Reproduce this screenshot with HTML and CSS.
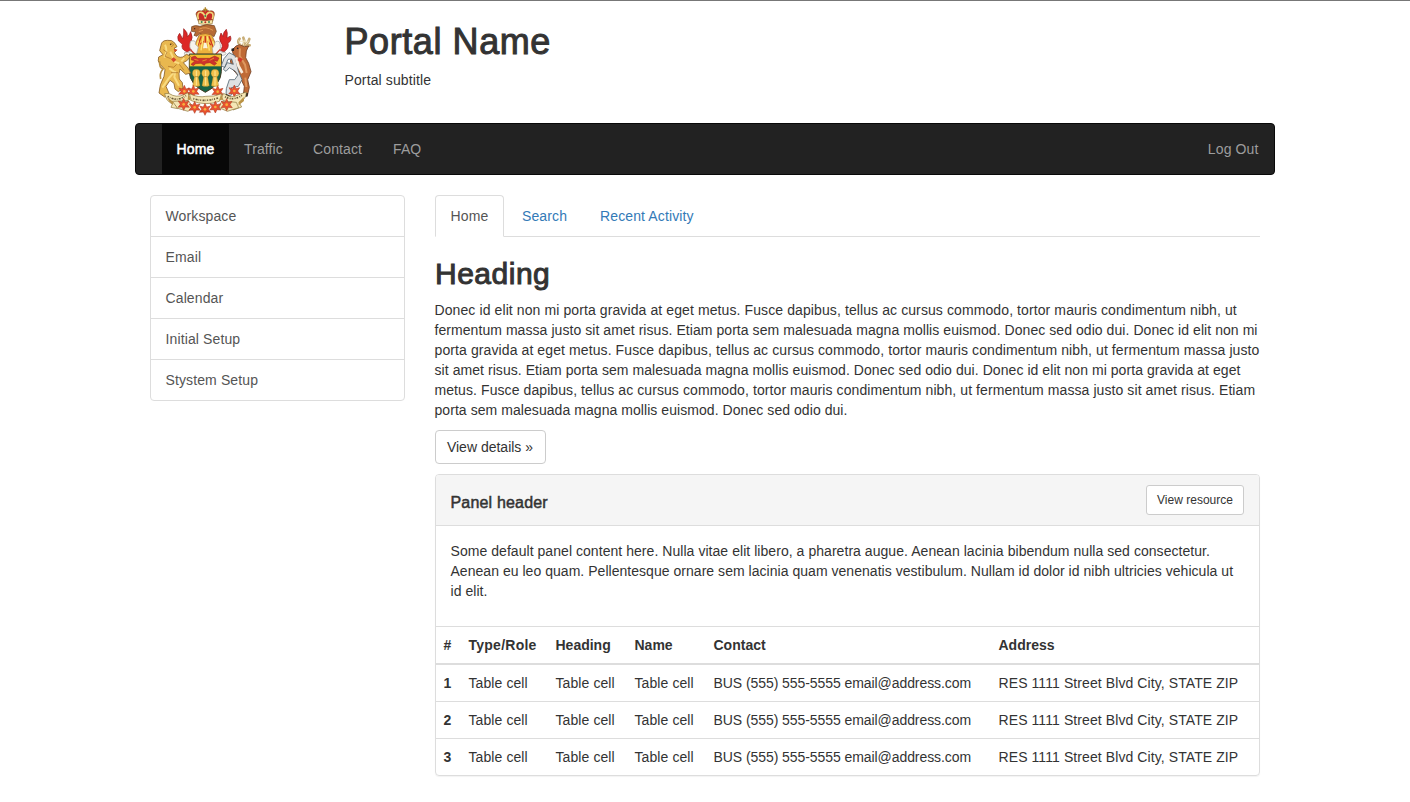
FILE: index.html
```html
<!DOCTYPE html>
<html lang="en">
<head>
<meta charset="utf-8">
<title>Portal Name</title>
<link rel="stylesheet" href="styles.css">
</head>
<body>
<div class="container">
  <header class="masthead">
    <svg class="crest" viewBox="0 0 360 366" role="img" aria-label="Coat of arms">
      <defs>
        <g id="lily" stroke="#a8321c" stroke-width="1.5">
          <path fill="#e8532f" d="M0-18 5-7 16-10 10 0 17 9 5 8 0 18-5 8-17 9-10 0-16-10-5-7Z"/>
          <circle r="4" fill="#f6b23c" stroke="none"/>
        </g>
      </defs>
      <!-- crown -->
      <path fill="#c72b27" stroke="#806024" stroke-width="2" d="M160 64 153 42Q155 30 169 33L181 29 193 33Q209 30 208 44L203 64Q181 70 160 64Z"/>
      <path fill="none" stroke="#efd579" stroke-width="5" d="M160 58Q154 35 169 37Q179 40 181 56Q183 40 193 37Q209 36 202 58"/>
      <path fill="#f7e5a4" stroke="#7d5b26" stroke-width="1.5" d="M160 59Q181 65 203 59L202 71Q181 76 161 71Z"/>
      <path stroke="#af8429" stroke-width="4" d="M181 22V35M175 28H187"/>
      <g fill="#398357"><circle cx="170" cy="66" r="3"/><circle cx="192" cy="66" r="3"/><circle cx="181" cy="48" r="3"/></g>
      <circle cx="181" cy="67" r="3" fill="#b92524"/>
      <!-- beaver -->
      <path fill="#b66a35" stroke="#68411f" stroke-width="2" d="M140 80Q151 74 165 79Q185 69 208 77L214 94 207 110 196 103 178 106 164 101 156 109 147 106 152 96 139 94Z"/>
      <path stroke="#e29b55" stroke-width="3" fill="none" d="M163 87Q182 78 204 91M161 95 174 91"/>
      <circle cx="149" cy="86" r="2" fill="#332218"/>
      <!-- helmet -->
      <path fill="#edb23d" stroke="#9b5525" stroke-width="2" d="M163 104Q181 97 200 105L212 132 207 163H156L149 135Z"/>
      <path fill="none" stroke="#cf3322" stroke-width="4" d="M169 109 157 140M181 108V145M192 109 205 142M166 133 176 124M187 124 198 135"/>
      <path fill="none" stroke="#ffe477" stroke-width="4" d="M175 109 168 151M187 109 193 152M160 122 155 143M203 124 208 141"/>
      <path fill="#faf4dc" d="M177 128 184 128 188 145 174 145Z"/>
      <!-- mantling -->
      <g fill="#dc2826" stroke="#971e20" stroke-width="2">
        <path d="M116 86Q130 98 127 111Q135 103 137 95Q146 113 137 127Q131 138 141 148L126 156Q106 147 112 133L100 122Q95 109 104 100L113 117Q117 103 116 86Z"/>
        <path d="M244 88Q233 98 235 110L228 99Q219 116 228 128Q237 139 225 151L237 156Q254 143 249 130Q262 121 256 108L246 114Q249 98 244 88Z"/>
      </g>
      <g fill="#f6f3ed" stroke="#a2a09b" stroke-width="2">
        <path d="M137 123Q155 119 151 133L160 141 154 165 136 168Q114 168 119 157Q134 161 140 150Q130 143 137 123Z"/>
        <path d="M223 125Q209 120 209 134L202 145 205 167H224Q249 166 241 157Q229 160 223 150Q230 142 223 125Z"/>
      </g>
      <path fill="none" stroke="#ca3c2a" stroke-width="4" d="M137 150 151 164M225 149 211 164"/>
      <!-- shield -->
      <path fill="#176446" stroke="#443b22" stroke-width="3" d="M133 162H229V215Q228 253 181 277Q134 253 133 216Z"/>
      <path fill="#f4bd2e" d="M134 164H228V199H134Z"/>
      <path fill="#cf332b" stroke="#962620" stroke-width="1.5" d="M139 172 150 168 158 175H194L209 168 222 174 217 184 205 182 215 190 208 196 195 188 182 190 178 196 168 190 152 191 145 197 138 193 150 182 139 180Z"/>
      <path fill="none" stroke="#f4bd2e" stroke-width="2" d="M148 178 160 181M172 183 185 179M194 181 207 174"/>
      <g fill="#f0c04d" stroke="#8d701c" stroke-width="1">
        <path id="sheaf" d="M142 221Q142 208 154 208Q166 208 166 221Q165 227 160 231L165 257Q154 262 143 257L148 231Q143 227 142 221Z"/>
        <use href="#sheaf" x="28"/><use href="#sheaf" x="56"/>
      </g>
      <path stroke="#ffe793" stroke-width="3" d="M154 212V256M182 212V256M210 212V256"/>
      <path stroke="#a57a26" stroke-width="2" d="M149 230H159M177 230H187M205 230H215"/>
      <!-- lion -->
      <path fill="#e9b84f" stroke="#8a602b" stroke-width="2.5" d="M48 136Q50 121 67 121Q81 118 90 130L96 140 87 145 95 151 88 158Q97 176 113 171L125 163 136 169 127 181 115 188 129 204 137 219 122 223 105 207Q100 220 103 237L112 248 114 266 100 275 90 267 87 250 75 241 63 259 72 280 59 291 42 279Q43 255 57 229L60 209 46 194Q36 183 41 171L54 164 44 152Z"/>
      <path fill="none" stroke="#f9db80" stroke-width="6" d="M60 134Q69 151 58 173M76 155 90 186 103 190M73 205 88 216 71 235 52 263M91 213 88 231 102 257M109 184 118 174"/>
      <path fill="none" stroke="#a86c26" stroke-width="2" d="M55 149 66 157 60 169 77 176M78 128 86 134 79 141M69 199 86 202 95 193M78 218 99 218M103 193 117 211"/>
      <path fill="#d5482d" d="M86 147 98 149 89 156ZM78 178 86 172 94 179 86 187Z"/>
      <circle cx="77" cy="133" r="2.5" fill="#4d301a"/>
      <path fill="none" stroke="#b88e3f" stroke-width="5" d="M44 184Q42 202 54 207Q43 220 47 237"/>
      <!-- deer -->
      <path fill="none" stroke="#c9ae78" stroke-width="8" stroke-linecap="round" d="M286 136Q275 126 284 116M294 137Q301 127 295 113M300 136 309 127 313 117M303 136H314"/>
      <path fill="none" stroke="#f2e6c2" stroke-width="3" d="M287 136 281 121M295 137 298 119M302 134 311 122M284 124H306"/>
      <path fill="#bf6a36" stroke="#714025" stroke-width="2.5" d="M261 150 273 138 284 134 298 140 311 138 304 153 302 173 311 190 318 215 308 239 313 262 307 287 295 286 298 259 288 238 272 218 263 209 256 183 265 163Z"/>
      <path fill="#dfe1e2" stroke="#536773" stroke-width="2.5" d="M270 167 252 158 237 176 229 197 239 203 249 178 260 177 265 193 247 188 235 208 243 214 253 203 270 213 279 225 269 239 253 239 244 266 243 286 255 291 262 278 259 263 280 259 291 239 280 213Z"/>
      <path fill="none" stroke="#de9860" stroke-width="6" d="M285 145 284 168 300 194 305 219M301 233 304 261"/>
      <path fill="none" stroke="#f7eee1" stroke-width="8" d="M273 172 280 197 292 219"/>
      <path fill="#25201d" d="M259 146 268 144 267 153 260 153ZM296 277 309 280 307 290 295 289ZM243 281 257 288 253 294 242 290Z"/>
      <circle cx="278" cy="145" r="2.5" fill="#29211b"/>
      <path fill="#cf392a" d="M284 172 294 178 286 187 277 180Z"/>
      <!-- flowers and scroll -->
      <use href="#lily" x="118" y="274"/><use href="#lily" x="145" y="274"/><use href="#lily" x="218" y="275"/><use href="#lily" x="268" y="273"/>
      <g fill="#f4e6b5" stroke="#8a7338" stroke-width="2">
        <path d="M59 281Q72 277 83 286Q104 294 128 278L136 296Q117 311 87 306L98 326 78 322 82 312Q62 302 59 281Z"/>
        <path d="M133 281Q162 294 182 289Q206 291 230 281L223 304Q181 319 139 302Z"/>
        <path d="M236 280Q257 297 276 286L304 276Q304 299 282 307L290 321 264 330 264 309Q237 308 229 294Z"/>
        <path d="M82 304 130 302 145 322 129 334 98 325ZM230 303 274 307 281 323 247 334 222 323Z"/>
      </g>
      <path fill="#bb9345" d="M66 291 86 307 83 314 73 305ZM130 283 138 302 128 298ZM230 283 223 302 234 298ZM296 291 281 307 281 316 297 303Z"/>
      <g fill="none" stroke="#685735" stroke-width="5">
        <path stroke-dasharray="4 3 2 4 6 3" d="M68 289Q95 307 123 287"/>
        <path stroke-dasharray="3 4 6 3 2 3" d="M145 296Q181 307 219 294"/>
        <path stroke-dasharray="3 3 5 4" d="M240 290Q263 304 291 286"/>
      </g>
      <use href="#lily" x="116" y="313"/><use href="#lily" x="149" y="322"/><use href="#lily" x="180" y="328"/><use href="#lily" x="211" y="321"/><use href="#lily" x="245" y="314"/>
    </svg>
    <div class="brand"><h1>Portal Name</h1><p>Portal subtitle</p></div>
  </header>
  <nav class="navbar">
    <a class="nav-home" href="#">Home</a><a class="nav-traffic" href="#">Traffic</a><a class="nav-contact" href="#">Contact</a><a class="nav-faq" href="#">FAQ</a><a class="nav-logout" href="#">Log Out</a>
  </nav>
  <div class="columns">
    <aside class="list-group"><a href="#">Workspace</a><a href="#">Email</a><a href="#">Calendar</a><a href="#">Initial Setup</a><a href="#">Stystem Setup</a></aside>
    <main>
      <nav class="tabs"><a class="active" href="#">Home</a><a class="tab-search" href="#">Search</a><a class="tab-recent" href="#">Recent Activity</a></nav>
      <h2>Heading</h2>
      <p class="intro"><span class="loose">Donec id elit non mi porta gravida at eget metus. Fusce dapibus, tellus ac cursus commodo, tortor mauris condimentum nibh, ut</span><br>fermentum massa justo sit amet risus. Etiam porta sem malesuada magna mollis euismod. Donec sed odio dui. Donec id elit non mi<br><span class="loose">porta gravida at eget metus. Fusce dapibus, tellus ac cursus commodo, tortor mauris condimentum nibh, ut fermentum massa justo</span><br>sit amet risus. Etiam porta sem malesuada magna mollis euismod. Donec sed odio dui. Donec id elit non mi porta gravida at eget<br><span class="medium">metus. Fusce dapibus, tellus ac cursus commodo, tortor mauris condimentum nibh, ut fermentum massa justo sit amet risus. Etiam</span><br>porta sem malesuada magna mollis euismod. Donec sed odio dui.</p>
      <a class="btn btn-details" href="#">View details »</a>
      <section class="panel">
        <div class="panel-heading"><h3>Panel header</h3><a class="btn btn-resource" href="#">View resource</a></div>
        <p class="panel-body">Some default panel content here. Nulla vitae elit libero, a pharetra augue. Aenean lacinia bibendum nulla sed consectetur.<br><span class="tight">Aenean eu leo quam. Pellentesque ornare sem lacinia quam venenatis vestibulum. Nullam id dolor id nibh ultricies vehicula ut</span><br>id elit.</p>
        <table>
          <colgroup><col class="c-num"><col class="c-role"><col class="c-mid"><col class="c-mid"><col class="c-contact"><col></colgroup>
          <thead><tr><th>#</th><th class="role">Type/Role</th><th>Heading</th><th>Name</th><th>Contact</th><th>Address</th></tr></thead>
          <tbody>
            <tr><th>1</th><td>Table cell</td><td>Table cell</td><td>Table cell</td><td class="contact">BUS (555) 555-5555 email@address.com</td><td>RES 1111 Street Blvd City, STATE ZIP</td></tr>
            <tr><th>2</th><td>Table cell</td><td>Table cell</td><td>Table cell</td><td class="contact">BUS (555) 555-5555 email@address.com</td><td>RES 1111 Street Blvd City, STATE ZIP</td></tr>
            <tr><th>3</th><td>Table cell</td><td>Table cell</td><td>Table cell</td><td class="contact">BUS (555) 555-5555 email@address.com</td><td>RES 1111 Street Blvd City, STATE ZIP</td></tr>
          </tbody>
        </table>
      </section>
    </main>
  </div>
</div>
</body>
</html>
```
FILE: styles.css
```css
* { box-sizing: border-box; }
body { margin: 0; height: 802px; overflow: hidden; border-top: 1px solid #777; background: #fff; color: #333; font: 14px/20px "Liberation Sans", Arial, sans-serif; white-space: nowrap; }
a { color: #337ab7; text-decoration: none; }
h1, h2, h3, p { margin: 0; }
h1, h2, h3 { font-weight: 400; -webkit-text-stroke: 1px currentColor; }
.container { width: 1140px; margin: 0 auto; }
.masthead { height: 122px; display: flex; padding-left: 10px; }
.crest { width: 120px; height: 122px; margin-top: -1px; flex: none; }
.brand { padding: 20px 0 0 79.5px; letter-spacing: 0.12px; }
h1 { font-size: 36px; line-height: 42px; margin-bottom: 7px; letter-spacing: 0.58px; }
.navbar { display: flex; height: 52px; padding-left: 26px; border: 1px solid #080808; border-radius: 4px; background: #222; margin-bottom: 20px; letter-spacing: 0.12px; }
.navbar a { color: #9d9d9d; padding: 15px 0 15px 15px; height: 50px; }
.navbar .nav-home { width: 67px; padding-left: 14.5px; background: #080808; color: #fff; -webkit-text-stroke: 0.5px #fff; }
.nav-traffic { width: 69px; }
.nav-contact { width: 80px; }
.navbar .nav-logout { margin-left: auto; padding-right: 15.5px; }
.columns { display: grid; grid-template-columns: 255px 825px; gap: 30px; padding: 0 15px; align-items: start; }
.list-group { border: 1px solid #ddd; border-radius: 4px; letter-spacing: 0.12px; }
.list-group a { display: block; height: 41px; padding: 10px 14.5px; color: #555; border-bottom: 1px solid #ddd; }
.list-group a:last-child { border-bottom: 0; height: 40px; }
.tabs { display: flex; height: 42px; border-bottom: 1px solid #ddd; margin-bottom: 20px; letter-spacing: 0.12px; }
.tabs a { padding: 11px 0 11px 15px; height: 42px; }
.tabs .active { width: 69px; padding: 10px 14.5px; margin-right: 3px; border: 1px solid #ddd; border-bottom-color: #fff; border-radius: 4px 4px 0 0; background: #fff; color: #555; }
.tab-search { width: 78px; }
h2 { font-size: 30px; line-height: 33px; margin-bottom: 10px; letter-spacing: 0.5px; }
.intro { margin: 0 0 10px -0.5px; letter-spacing: 0.06px; }
.loose { letter-spacing: 0.1px; }
.medium { letter-spacing: 0.085px; }
.btn { display: block; border: 1px solid #ccc; background: #fff; color: #333; text-align: center; }
.btn-details { width: 111px; height: 34px; padding: 6px 1px 6px 0; border-radius: 4px; margin-bottom: 10px; }
.btn-resource { width: 98px; height: 30px; padding: 5px 0; font-size: 12px; line-height: 18px; border-radius: 3px; }
.panel { border: 1px solid #ddd; border-radius: 4px; box-shadow: 0 1px 1px rgba(0,0,0,.05); }
.panel-heading { display: flex; justify-content: space-between; height: 51px; padding: 10px 15px 10px 14.5px; border-bottom: 1px solid #ddd; border-radius: 3px 3px 0 0; background: #f5f5f5; }
h3 { font-size: 16px; line-height: 18px; padding-top: 9px; letter-spacing: 0.18px; -webkit-text-stroke-width: 0.5px; }
.panel-body { padding: 15px 15px 25px 14.5px; letter-spacing: 0.05px; }
.tight { letter-spacing: 0.035px; }
table { width: 100%; table-layout: fixed; border-collapse: separate; border-spacing: 0; border-top: 1px solid #ddd; }
.c-num { width: 25px; }
.c-role { width: 87px; }
.c-mid { width: 79px; }
.c-contact { width: 285px; }
th, td { padding: 8px 7.5px; text-align: left; }
td { letter-spacing: 0.09px; }
.role { letter-spacing: 0.25px; }
.contact { letter-spacing: -0.07px; }
thead th { border-bottom: 2px solid #ddd; }
tbody tr + tr > * { border-top: 1px solid #ddd; }
```
